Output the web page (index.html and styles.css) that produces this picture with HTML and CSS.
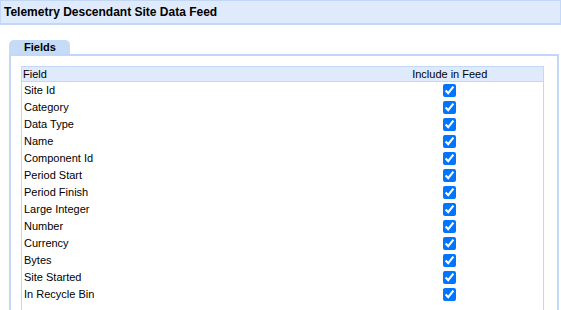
FILE: index.html
```html
<!DOCTYPE html>
<html lang="en">
<head>
  <meta charset="UTF-8" />
  <title>Telemetry Descendant Site Data Feed</title>
  <link rel="stylesheet" href="styles.css">
</head>
<body>
  <div class="page-header">Telemetry Descendant Site Data Feed</div>

  <div class="tabs">
    <div class="tab">Fields</div>
  </div>

  <div class="panel">
    <table class="fields">
      <thead>
        <tr>
          <th class="col-name">Field</th>
          <th class="col-include">Include in Feed</th>
        </tr>
      </thead>
      <tbody>
        <tr><td>Site Id</td><td class="check"><input type="checkbox" checked></td></tr>
        <tr><td>Category</td><td class="check"><input type="checkbox" checked></td></tr>
        <tr><td>Data Type</td><td class="check"><input type="checkbox" checked></td></tr>
        <tr><td>Name</td><td class="check"><input type="checkbox" checked></td></tr>
        <tr><td>Component Id</td><td class="check"><input type="checkbox" checked></td></tr>
        <tr><td>Period Start</td><td class="check"><input type="checkbox" checked></td></tr>
        <tr><td>Period Finish</td><td class="check"><input type="checkbox" checked></td></tr>
        <tr><td>Large Integer</td><td class="check"><input type="checkbox" checked></td></tr>
        <tr><td>Number</td><td class="check"><input type="checkbox" checked></td></tr>
        <tr><td>Currency</td><td class="check"><input type="checkbox" checked></td></tr>
        <tr><td>Bytes</td><td class="check"><input type="checkbox" checked></td></tr>
        <tr><td>Site Started</td><td class="check"><input type="checkbox" checked></td></tr>
        <tr><td>In Recycle Bin</td><td class="check"><input type="checkbox" checked></td></tr>
      </tbody>
    </table>
  </div>
</body>
</html>
```

FILE: styles.css
```css
/* Reset */
* { margin: 0; padding: 0; box-sizing: border-box; }

body {
  font-family: "Liberation Sans", Arial, sans-serif;
  font-size: 11px;
  color: #000;
  background: #fff;
  overflow: hidden;
}

/* Title bar */
.page-header {
  height: 25px;
  padding: 4px 0 0 3px;
  background: #dfeafd;
  border: 1px solid #c3d7f6;
  border-bottom-width: 2px;
  font-size: 12px;
  font-weight: bold;
}

/* Tab strip */
.tabs {
  display: flex;
  margin-top: 15px;
  padding-left: 9px;
}
.tab {
  width: 61px;
  height: 14px;
  padding-left: 15px;
  line-height: 15px;
  background: #c6dbf8;
  border-radius: 5px 5px 0 0;
  font-weight: bold;
}

/* Panel below the tab */
.panel {
  margin: 0 2px 0 9px;
  padding: 10px 13px 20px 10px;
  border: 2px solid #c3d7f6;
  border-bottom: none;
}

/* Field table */
.fields {
  width: 100%;
  border-collapse: collapse;
  border: 1px solid #c3d7f6;
}
.fields th {
  height: 15px;
  padding: 0 1px;
  background: #dfeafd;
  border-bottom: 1px solid #c3d7f6;
  font-weight: normal;
  line-height: 14px;
}
.fields th.col-name { text-align: left; }
.fields th.col-include { width: 187px; text-align: center; }

.fields td {
  height: 17px;
  padding: 0 2px;
  line-height: 17px;
  vertical-align: middle;
}
.fields tbody tr:last-child td { padding-bottom: 10px; }

.fields td.check {
  text-align: center;
}
.fields td.check input {
  width: 13px;
  height: 13px;
  margin: 2px 0 0 0;
  vertical-align: top;
}
```
